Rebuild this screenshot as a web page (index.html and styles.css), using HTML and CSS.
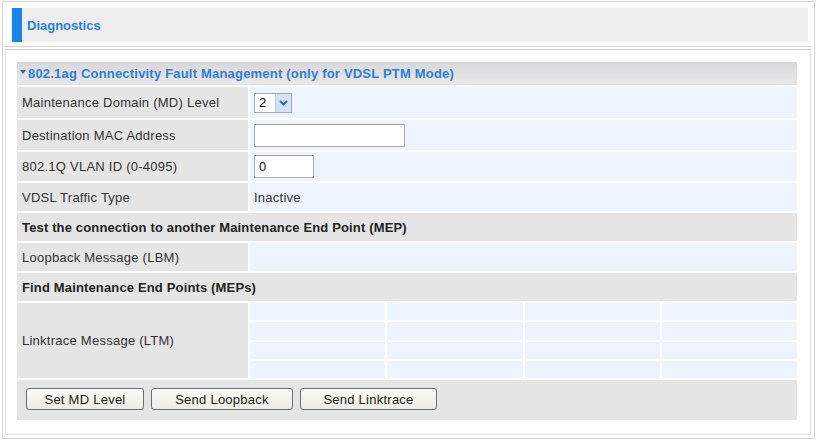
FILE: index.html
```html
<!DOCTYPE html>
<html>
<head>
<meta charset="utf-8">
<link rel="stylesheet" href="styles.css">
</head>
<body>
<div class="page">
  <div class="title-bar">
    <span class="title-mark"></span>
    <span class="title-text">Diagnostics</span>
  </div>
  <div class="box">
    <div class="cfm">
      <div class="sec-head"><svg class="tri" width="6" height="4" viewBox="0 0 6 4"><path d="M0 0 H6 L3 4 Z" fill="#44618c"/></svg>802.1ag Connectivity Fault Management (only for VDSL PTM Mode)</div>

      <div class="lbl r31">Maintenance Domain (MD) Level</div>
      <div class="val r31">
        <div class="select"><span class="sel-val">2</span><span class="sel-btn"><svg width="9" height="6" viewBox="0 0 9 6"><path d="M1 1 L4.5 4.5 L8 1" fill="none" stroke="#2f62c8" stroke-width="1.8"/></svg></span></div>
      </div>

      <div class="lbl r30">Destination MAC Address</div>
      <div class="val r30"><div class="input mac"></div></div>

      <div class="lbl r29">802.1Q VLAN ID (0-4095)</div>
      <div class="val r29"><div class="input vlan">0</div></div>

      <div class="lbl r28">VDSL Traffic Type</div>
      <div class="val r28 txt">Inactive</div>

      <div class="sub-head r28">Test the connection to another Maintenance End Point (MEP)</div>

      <div class="lbl r28">Loopback Message (LBM)</div>
      <div class="val r28"></div>

      <div class="sub-head r28">Find Maintenance End Points (MEPs)</div>

      <div class="lbl lt">Linktrace Message (LTM)</div>
      <div class="lt-grid">
        <div></div><div></div><div></div><div></div>
        <div></div><div></div><div></div><div></div>
        <div></div><div></div><div></div><div></div>
        <div></div><div></div><div></div><div></div>
      </div>

      <div class="btn-row">
        <button class="btn b1">Set MD Level</button>
        <button class="btn b2">Send Loopback</button>
        <button class="btn b3">Send Linktrace</button>
      </div>
    </div>
  </div>
</div>
</body>
</html>
```

FILE: styles.css
```css
html, body {
  margin: 0;
  padding: 0;
  background: #ffffff;
}
body {
  font-family: "Liberation Sans", Arial, sans-serif;
  font-size: 13px;
  letter-spacing: 0.25px;
  color: #333333;
}
.page {
  box-sizing: border-box;
  margin: 1px 0 0 2px;
  width: 813px;
  height: 438px;
  border: 1px solid #d6d6d6;
  padding: 6px 0 0 2px;
}
.title-bar {
  margin-left: 6px;
  width: 797px;
  height: 34px;
  background: #eeeeee;
  display: flex;
  align-items: center;
}
.title-mark {
  width: 10px;
  height: 34px;
  margin-left: 1px;
  background: #1a83e6;
}
.title-text {
  margin-left: 5px;
  color: #2b7fd8;
  font-weight: bold;
  font-size: 13px;
  letter-spacing: 0;
  margin-top: 1px;
}
.box {
  box-sizing: border-box;
  margin-top: 4px;
  width: 806px;
  height: 389px;
  border: 1px solid #dddddd;
  border-top: 4px double #d2d2d2;
  padding: 12px 12px 0 11px;
}
.cfm {
  display: grid;
  grid-template-columns: 231px 1fr;
  gap: 2px;
  width: 780px;
}
.sec-head {
  grid-column: 1 / 3;
  height: 23px;
  display: flex;
  align-items: center;
  padding-left: 3px;
  background: linear-gradient(#d8d8db, #e8e8ea);
  border-bottom: 1px solid #e2e2e4;
  box-sizing: border-box;
  color: #2f7fcf;
  font-weight: bold;
  font-size: 13px;
  letter-spacing: 0.2px;
}
.tri {
  margin-right: 2px;
  margin-top: -3px;
}
.r31 { height: 31px; }
.r30 { height: 30px; }
.r29 { height: 29px; }
.r28 { height: 28px; }
.lbl {
  background: #e5e5e5;
  display: flex;
  align-items: center;
  padding-left: 5px;
  color: #333333;
}
.val {
  background: #edf4fd;
  display: flex;
  align-items: center;
  padding-left: 4px;
}
.val.txt { padding-left: 4px; color: #333333; }
.sub-head {
  grid-column: 1 / 3;
  background: #e5e5e5;
  display: flex;
  align-items: center;
  padding-left: 5px;
  font-weight: bold;
  letter-spacing: 0.15px;
  color: #222222;
}
.select {
  box-sizing: border-box;
  width: 38px;
  height: 20px;
  border: 1px solid #a8a8a8;
  background: #ffffff;
  display: flex;
  align-items: stretch;
}
.sel-val {
  flex: 1;
  padding-left: 4px;
  font-size: 13px;
  line-height: 18px;
  color: #111111;
}
.sel-btn {
  width: 15px;
  background: #d4e2f7;
  border-left: 1px solid #c0cfe6;
  display: flex;
  align-items: center;
  justify-content: center;
}
.input {
  box-sizing: border-box;
  height: 23px;
  border: 1px solid #a9aeb6;
  border-top-color: #9aa0a8;
  background: #ffffff;
  padding-left: 4px;
  line-height: 21px;
  color: #111111;
}
.input.mac { width: 151px; }
.input.vlan { width: 60px; }
.lbl.lt { height: 75px; }
.lt-grid {
  display: grid;
  grid-template-columns: repeat(4, 1fr);
  grid-template-rows: repeat(4, 1fr);
  gap: 2px;
  height: 75px;
}
.lt-grid div { background: #edf4fd; }
.btn-row {
  grid-column: 1 / 3;
  height: 40px;
  background: #e5e5e5;
  display: flex;
  align-items: center;
  gap: 7px;
  padding-left: 9px;
}
.btn {
  box-sizing: border-box;
  height: 22px;
  font-family: "Liberation Sans", Arial, sans-serif;
  font-size: 13px;
  letter-spacing: 0.25px;
  color: #222222;
  background: linear-gradient(#fbfbf8, #ecebe4);
  border: 1px solid #6a707a;
  border-radius: 3px;
  padding: 0;
  margin-top: -2px;
}
.b1 { width: 118px; }
.b2 { width: 142px; }
.b3 { width: 137px; }
```
